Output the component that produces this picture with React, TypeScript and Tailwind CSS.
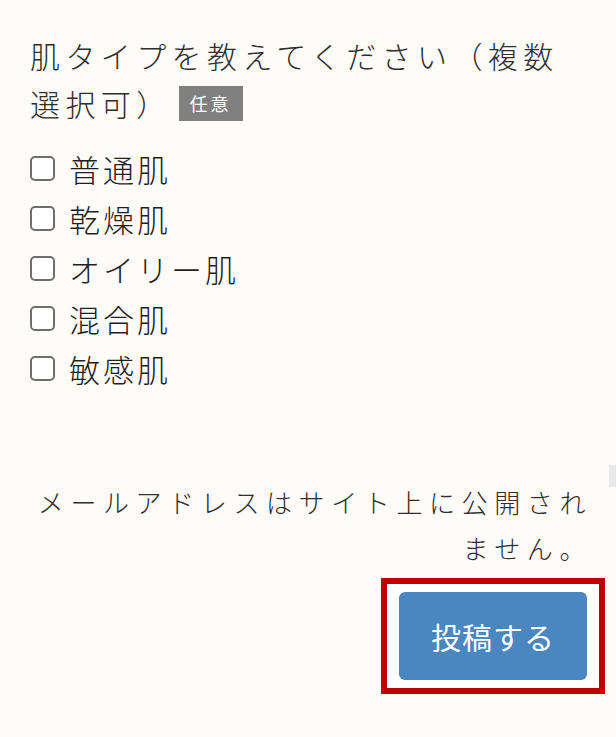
import React from "react";

const font = { fontFamily: '"Noto Sans CJK JP", "Noto Sans", sans-serif' };

const options = ["普通肌", "乾燥肌", "オイリー肌", "混合肌", "敏感肌"];

export default function App() {
  return (
    <div
      className="min-h-screen w-[616px] bg-[#fefcf8] text-[#333333] overflow-hidden"
      style={font}
    >
      <div className="pl-[30px] pr-[30px] pt-[31px]">
        <div className="text-[30px] leading-[48px] tracking-[5.4px] font-light text-[#2e2e2e] whitespace-nowrap">
          肌タイプを教えてください（複数
        </div>
        <div className="flex items-center h-[48px]">
          <span className="text-[30px] leading-[48px] tracking-[5.4px] font-light text-[#2e2e2e]">
            選択可）
          </span>
          <span className="ml-[7px] inline-flex items-center justify-center w-[64px] h-[35px] bg-[#808080] text-white text-[18px] tracking-[3px] font-normal leading-none">
            任意
          </span>
        </div>
        <div className="mt-[16px] flex flex-col">
          {options.map((o) => (
            <label key={o} className="flex items-center h-[50px]">
              <span className="w-[25px] h-[25px] border-2 border-[#6e6e6e] rounded-[5px] bg-white shrink-0" />
              <span className="ml-[14px] text-[31px] tracking-[3px] font-light leading-none text-[#1f1f1f]">
                {o}
              </span>
            </label>
          ))}
        </div>
      </div>
      <div className="mt-[72px] flex justify-end">
        <div className="w-[7px] h-[22px] bg-[#e9e9e9]" />
      </div>
      <div className="-mt-[8px] pl-[30px] pr-[24px] text-right text-[26px] leading-[46px] tracking-[6.6px] font-light text-[#2e2e2e]">
        メールアドレスはサイト上に公開されません。
      </div>
      <div className="mt-[7px] flex justify-end pr-[11px]">
        <div className="border-[6px] border-[#c00000] bg-white px-[12px] py-[8px]">
          <button className="w-[188px] h-[88px] rounded-[6px] bg-[#4a86bf] text-white text-[30px] tracking-[1px]">
            投稿する
          </button>
        </div>
      </div>
    </div>
  );
}
